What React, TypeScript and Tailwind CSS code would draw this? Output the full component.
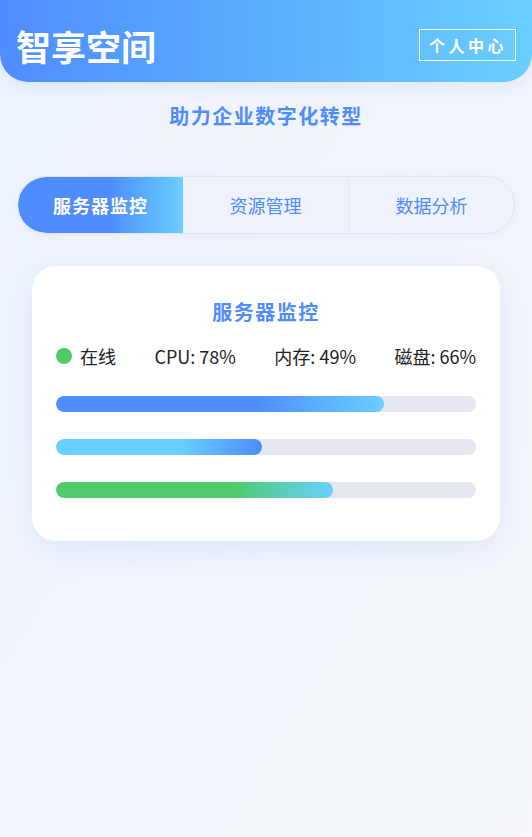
import React from "react";

const font = { fontFamily: '"Noto Sans CJK SC", "Noto Sans", sans-serif' };

function Bar({ pct, cls }: { pct: number; cls: string }) {
  return (
    <div className="h-4 w-full rounded-full bg-[#e5e8f0] overflow-hidden">
      <div className={`h-full rounded-full ${cls}`} style={{ width: `${pct}%` }} />
    </div>
  );
}

export default function App() {
  return (
    <div
      style={font}
      className="min-h-[837px] w-full bg-gradient-to-br from-[#edf3fe] to-[#f4f6f9]"
    >
      <header className="h-[82px] rounded-b-[28px] bg-gradient-to-r from-[#4f8cff] to-[#6acfff] flex items-center justify-between pl-4 pr-4 shadow-[0_4px_16px_rgba(79,140,255,0.12)]">
        <h1 className="text-[35px] leading-none font-bold text-white mt-[8px]">智享空间</h1>
        <button className="border border-white text-white font-bold text-[16px] leading-[22px] tracking-[3.5px] pl-[9px] pr-[8px] py-1 mt-[8px]">
          个人中心
        </button>
      </header>

      <p className="text-center text-[20px] font-bold text-[#4f8cff] tracking-[1.5px] mt-[20px] leading-[28px]">
        助力企业数字化转型
      </p>

      <div className="mx-[17px] mt-[46px] h-[58px] rounded-[29px] border border-[#dfe7f5] bg-[#eef2fb] flex overflow-hidden shadow-[0_2px_10px_rgba(79,140,255,0.06)]">
        <div className="flex-1 flex items-center justify-center bg-gradient-to-r from-[#4f8cff] from-55% to-[#6acfff] text-white font-bold text-[18px] tracking-[1px] rounded-[29px] rounded-r-none">
          服务器监控
        </div>
        <div className="flex-1 flex items-center justify-center text-[#4f8cff] text-[18px]">
          资源管理
        </div>
        <div className="flex-1 flex items-center justify-center text-[#4f8cff] text-[18px] border-l border-[#dfe7f5]">
          数据分析
        </div>
      </div>

      <div className="mx-8 mt-[32px] bg-white rounded-[24px] px-6 pt-[32px] pb-[43px] shadow-[0_8px_32px_rgba(79,140,255,0.12)]">
        <h2 className="text-center text-[20px] leading-[28px] font-bold text-[#4f8cff] tracking-[1.5px]">
          服务器监控
        </h2>
        <div className="mt-[16px] flex items-center justify-between text-[18px] leading-[28px] text-[#222]">
          <div className="flex items-center gap-2">
            <span className="w-4 h-4 rounded-full bg-[#4fcb6c] inline-block" />
            <span>在线</span>
          </div>
          <span>CPU: 78%</span>
          <span>内存: 49%</span>
          <span>磁盘: 66%</span>
        </div>
        <div className="mt-[26px] flex flex-col gap-[27px]">
          <Bar pct={78} cls="bg-gradient-to-r from-[#4f8cff] from-60% to-[#6acfff]" />
          <Bar pct={49} cls="bg-gradient-to-r from-[#6acfff] from-60% to-[#4f8cff]" />
          <Bar pct={66} cls="bg-gradient-to-r from-[#4fcb6c] from-65% to-[#6acfff]" />
        </div>
      </div>
    </div>
  );
}
